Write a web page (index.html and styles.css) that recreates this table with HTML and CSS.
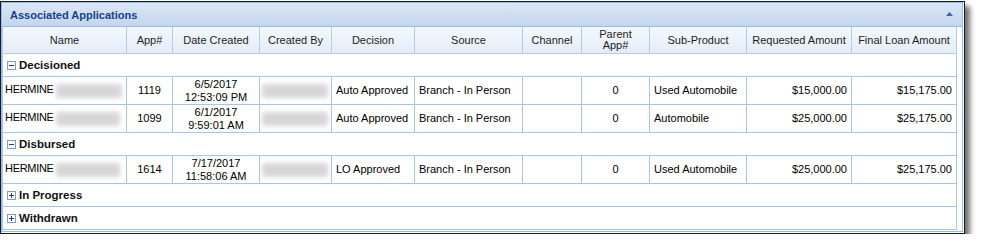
FILE: index.html
```html
<!DOCTYPE html>
<html>
<head>
<meta charset="utf-8">
<link rel="stylesheet" href="styles.css">
</head>
<body>
<div class="frame">
  <div class="panel">
    <div class="titlebar">
      <span class="title">Associated Applications</span>
      <svg class="collapse" width="7" height="4" viewBox="0 0 7 4"><path d="M0 4L3.5 0L7 4Z" fill="#3f67a8"/></svg>
    </div>
    <div class="gridwrap">
      <table class="grid">
        <colgroup>
          <col class="c-name"><col class="c-app"><col class="c-date"><col class="c-by"><col class="c-dec"><col class="c-src"><col class="c-chan"><col class="c-par"><col class="c-sub"><col class="c-req"><col class="c-fin">
        </colgroup>
        <thead>
          <tr>
            <th>Name</th><th>App#</th><th>Date Created</th><th>Created By</th><th>Decision</th><th>Source</th><th>Channel</th><th>Parent<br>App#</th><th>Sub-Product</th><th>Requested Amount</th><th>Final Loan Amount</th>
          </tr>
        </thead>
        <tbody>
          <tr class="group"><td colspan="11"><svg class="tog" width="9" height="9" viewBox="0 0 9 9"><rect x="0.5" y="0.5" width="8" height="8" fill="#fff" stroke="#7f9fcb"/><path d="M2 4.5h5" stroke="#1d3f78"/></svg>Decisioned</td></tr>
          <tr class="row">
            <td class="name">HERMINE <span class="blur b-name"></span></td><td class="ctr">1119</td><td class="ctr">6/5/2017<br>12:53:09 PM</td><td><span class="blur b-by"></span></td><td>Auto Approved</td><td>Branch - In Person</td><td></td><td class="ctr">0</td><td>Used Automobile</td><td class="num">$15,000.00</td><td class="num">$15,175.00</td>
          </tr>
          <tr class="row">
            <td class="name">HERMINE <span class="blur b-name2"></span></td><td class="ctr">1099</td><td class="ctr">6/1/2017<br>9:59:01 AM</td><td><span class="blur b-by"></span></td><td>Auto Approved</td><td>Branch - In Person</td><td></td><td class="ctr">0</td><td>Automobile</td><td class="num">$25,000.00</td><td class="num">$25,175.00</td>
          </tr>
          <tr class="group"><td colspan="11"><svg class="tog" width="9" height="9" viewBox="0 0 9 9"><rect x="0.5" y="0.5" width="8" height="8" fill="#fff" stroke="#7f9fcb"/><path d="M2 4.5h5" stroke="#1d3f78"/></svg>Disbursed</td></tr>
          <tr class="row">
            <td class="name">HERMINE <span class="blur b-name2"></span></td><td class="ctr">1614</td><td class="ctr">7/17/2017<br>11:58:06 AM</td><td><span class="blur b-by"></span></td><td>LO Approved</td><td>Branch - In Person</td><td></td><td class="ctr">0</td><td>Used Automobile</td><td class="num">$25,000.00</td><td class="num">$25,175.00</td>
          </tr>
          <tr class="group"><td colspan="11"><svg class="tog" width="9" height="9" viewBox="0 0 9 9"><rect x="0.5" y="0.5" width="8" height="8" fill="#fff" stroke="#7f9fcb"/><path d="M2 4.5h5M4.5 2v5" stroke="#1d3f78"/></svg>In Progress</td></tr>
          <tr class="group"><td colspan="11"><svg class="tog" width="9" height="9" viewBox="0 0 9 9"><rect x="0.5" y="0.5" width="8" height="8" fill="#fff" stroke="#7f9fcb"/><path d="M2 4.5h5M4.5 2v5" stroke="#1d3f78"/></svg>Withdrawn</td></tr>
        </tbody>
      </table>
    </div>
  </div>
</div>
</body>
</html>
```

FILE: styles.css
```css
html, body {
  margin: 0;
  padding: 0;
  background: #fff;
}
body {
  font-family: "Liberation Sans", Arial, sans-serif;
  font-size: 11px;
  color: #000;
}
.frame {
  margin-top: 1px;
  width: 965px;
  border: 1px solid #151b26;
  box-shadow: 5px 5px 5px rgba(0,0,0,0.55);
  background: #fff;
  box-sizing: border-box;
}
.panel {
  border: 1px solid #99bbe8;
  margin: 0 1px 1px 0;
}
.titlebar {
  height: 23px;
  display: flex;
  align-items: center;
  justify-content: space-between;
  padding: 0 9px 0 8px;
  background: linear-gradient(#dae6f5, #c3d6ee);
  border-bottom: 1px solid #99bbe8;
}
.title {
  font-weight: bold;
  font-size: 11px;
  color: #15428b;
}
.collapse {
  display: block;
  margin-top: -1px;
}
.gridwrap {
  padding: 0 4px 1px 0;
  background: #fff;
}
.grid {
  border-collapse: collapse;
  table-layout: fixed;
  width: 955px;
}
.c-name { width: 124px; }
.c-app { width: 46px; }
.c-date { width: 87px; }
.c-by { width: 72px; }
.c-dec { width: 83px; }
.c-src { width: 108px; }
.c-chan { width: 59px; }
.c-par { width: 68px; }
.c-sub { width: 97px; }
.c-req { width: 105px; }
.c-fin { width: 105px; }
.grid th {
  height: 26px;
  padding: 0 2px;
  font-weight: normal;
  color: #1e1e1e;
  text-align: center;
  line-height: 11px;
  background: linear-gradient(#f4f8fd, #e4ecf7);
  border: 1px solid #b6cde8;
  border-top: none;
  white-space: nowrap;
}
.grid td {
  border: 1px solid #a8c5e6;
  padding: 0 4px;
  line-height: 13px;
  white-space: nowrap;
  overflow: hidden;
}
.row td {
  height: 27px;
}
.group td {
  height: 22px;
  font-weight: bold;
  font-size: 11.5px;
  color: #111;
  padding-left: 4px;
}
.tog {
  display: inline-block;
  vertical-align: -1px;
  margin-right: 3px;
}
.ctr { text-align: center; }
.num { text-align: right; }
.grid td.name {
  padding-left: 2px;
  letter-spacing: -0.3px;
}
.blur {
  display: inline-block;
  height: 14px;
  vertical-align: middle;
  background: #d6d6d6;
  filter: blur(2.5px);
  border-radius: 3px;
  letter-spacing: 0;
}
.b-name { width: 66px; }
.b-name2 { width: 64px; }
.b-by { width: 66px; margin-left: -2px; }
```
